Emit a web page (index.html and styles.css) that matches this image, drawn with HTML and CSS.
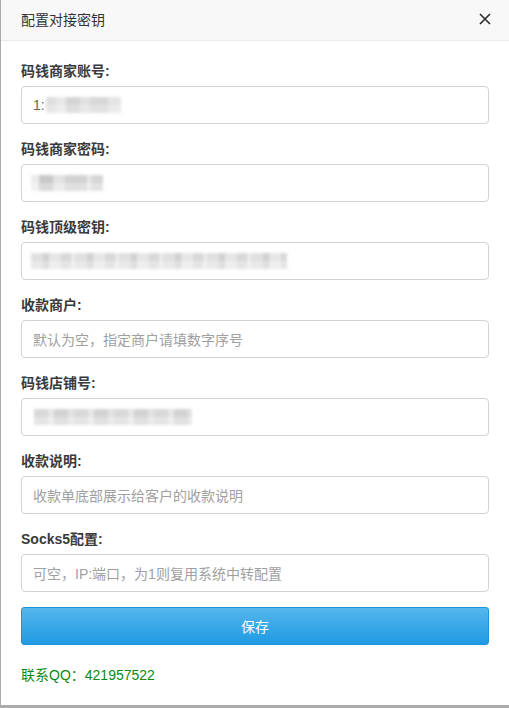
FILE: index.html
```html
<!DOCTYPE html>
<html lang="zh-CN">
<head>
<meta charset="utf-8">
<title>配置对接密钥</title>
<link rel="stylesheet" href="styles.css">
</head>
<body>
<div class="dialog">
  <div class="dialog-header">
    <span class="dialog-title">配置对接密钥</span>
    <svg class="close" width="12" height="12" viewBox="0 0 12 12"><path d="M1 1L11 11M11 1L1 11" stroke="#2b2b2b" stroke-width="1.6" fill="none"/></svg>
  </div>
  <form class="dialog-body">
    <div class="field">
      <label class="label">码钱商家账号:</label>
      <div class="input"><span class="val">1:</span><span class="mosaic m1"></span></div>
    </div>
    <div class="field">
      <label class="label">码钱商家密码:</label>
      <div class="input"><span class="mosaic m2"></span></div>
    </div>
    <div class="field">
      <label class="label">码钱顶级密钥:</label>
      <div class="input"><span class="mosaic m3"></span></div>
    </div>
    <div class="field">
      <label class="label">收款商户:</label>
      <div class="input"><span class="ph">默认为空，指定商户请填数字序号</span></div>
    </div>
    <div class="field">
      <label class="label">码钱店铺号:</label>
      <div class="input"><span class="mosaic m5"></span></div>
    </div>
    <div class="field">
      <label class="label">收款说明:</label>
      <div class="input"><span class="ph">收款单底部展示给客户的收款说明</span></div>
    </div>
    <div class="field">
      <label class="label">Socks5配置:</label>
      <div class="input"><span class="ph">可空，IP:端口，为1则复用系统中转配置</span></div>
    </div>
    <div class="btn">保存</div>
    <div class="contact">联系QQ：421957522</div>
  </form>
</div>
</body>
</html>
```
FILE: styles.css
```css
html, body {
  margin: 0;
  padding: 0;
}
body {
  background: #ababab;
  width: 509px;
  height: 708px;
  overflow: hidden;
  font-family: "Liberation Sans", "Noto Sans CJK SC", sans-serif;
  font-size: 14px;
  color: #333;
}
.dialog {
  margin-left: 1px;
  width: 508px;
  height: 705px;
  background: #fff;
}
.dialog-header {
  height: 40px;
  background: #f8f8f8;
  border-bottom: 1px solid #eaeaea;
  display: flex;
  align-items: center;
  justify-content: space-between;
  padding: 0 18px 0 20px;
}
.dialog-title {
  font-size: 14px;
  color: #333;
  position: relative;
  top: -1px;
}
.close {
  display: block;
  position: relative;
  top: -1px;
}
.dialog-body {
  padding: 20px 20px 0 20px;
  margin: 0;
}
.field {
  margin-bottom: 15px;
}
.label {
  display: block;
  height: 20px;
  line-height: 20px;
  font-weight: bold;
  font-size: 14px;
  color: #3a3a3a;
  margin-bottom: 5px;
}
.input {
  height: 36px;
  border: 1px solid #d2d2d2;
  border-radius: 4px;
  display: flex;
  align-items: center;
  padding: 0 11px;
  overflow: hidden;
}
.val {
  color: #666;
  font-size: 14px;
}
.ph {
  color: #a0a0a0;
  font-size: 14px;
}
.mosaic {
  display: block;
  height: 16px;
  filter: blur(1.4px);
}
.m1 {
  width: 75px;
  margin-left: 1px;
  background:
    linear-gradient(180deg, rgba(255,255,255,0) 0 50%, rgba(255,255,255,0.25) 50% 100%),
    linear-gradient(90deg, #dedede 0 10px, #e8e8e8 10px 20px, #d4d4d4 20px 34px, #e2e2e2 34px 44px, #d8d8d8 44px 62px, #e4e4e4 62px 75px);
}
.m2 {
  width: 72px;
  margin-left: -2px;
  background:
    linear-gradient(180deg, rgba(255,255,255,0) 0 50%, rgba(255,255,255,0.3) 50% 100%),
    linear-gradient(90deg, #ececec 0 8px, #c8c8c8 8px 22px, #e2e2e2 22px 34px, #d2d2d2 34px 56px, #e8e8e8 56px 60px, #d6d6d6 60px 72px);
}
.m3 {
  width: 256px;
  margin-left: -2px;
  background:
    linear-gradient(180deg, rgba(255,255,255,0) 0 50%, rgba(255,255,255,0.3) 50% 100%),
    repeating-linear-gradient(90deg, #e0e0e0 0 12px, #d0d0d0 12px 18px, #e6e6e6 18px 30px, #d8d8d8 30px 40px, #ebebeb 40px 44px);
}
.m5 {
  width: 158px;
  margin-left: 1px;
  background:
    linear-gradient(180deg, rgba(255,255,255,0) 0 50%, rgba(255,255,255,0.3) 50% 100%),
    repeating-linear-gradient(90deg, #d8d8d8 0 14px, #e6e6e6 14px 20px, #d2d2d2 20px 34px, #e2e2e2 34px 40px);
}
.btn {
  height: 36px;
  border: 1px solid #1d95db;
  border-radius: 3px;
  background: linear-gradient(180deg, #55b7ed 0%, #1f9ae3 100%);
  color: #fff;
  display: flex;
  align-items: center;
  justify-content: center;
  font-size: 14px;
  margin-top: 0;
}
.contact {
  margin-top: 20px;
  height: 20px;
  line-height: 20px;
  color: #0a8a12;
  font-size: 14px;
}
```
